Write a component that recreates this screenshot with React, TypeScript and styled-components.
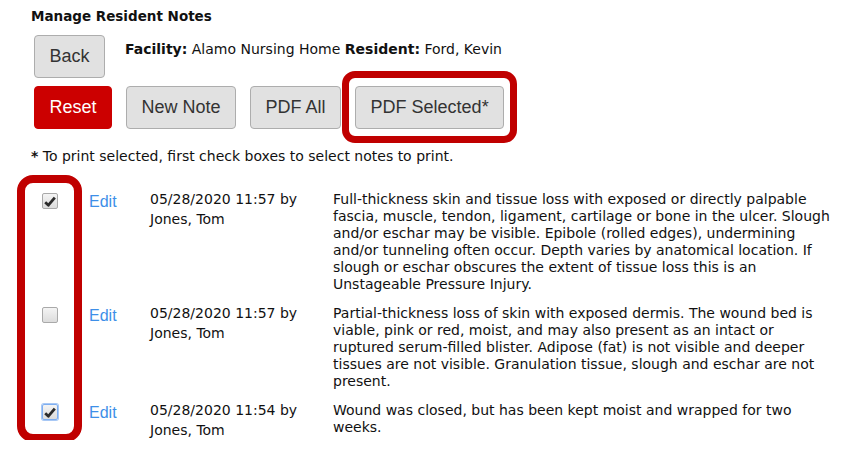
import React from "react";
import styled, {createGlobalStyle} from "styled-components";

const GlobalStyle = createGlobalStyle`
  html, body {
    margin: 0;
    padding: 0;
    background: #fff;
  }
  body {
    font-family: Verdana, "DejaVu Sans", sans-serif;
    font-size: 14px;
    color: #111;
  }
`;

type Note = {
  id: number;
  checked: boolean;
  focused?: boolean;
  date: string;
  author: string;
  text: string;
};

const notes: Note[] = [
  {
    id: 1,
    checked: true,
    date: "05/28/2020 11:57 by",
    author: "Jones, Tom",
    text:
      "Full-thickness skin and tissue loss with exposed or directly palpable fascia, muscle, tendon, ligament, cartilage or bone in the ulcer. Slough and/or eschar may be visible. Epibole (rolled edges), undermining and/or tunneling often occur. Depth varies by anatomical location. If slough or eschar obscures the extent of tissue loss this is an Unstageable Pressure Injury.",
  },
  {
    id: 2,
    checked: false,
    date: "05/28/2020 11:57 by",
    author: "Jones, Tom",
    text:
      "Partial-thickness loss of skin with exposed dermis. The wound bed is viable, pink or red, moist, and may also present as an intact or ruptured serum-filled blister. Adipose (fat) is not visible and deeper tissues are not visible. Granulation tissue, slough and eschar are not present.",
  },
  {
    id: 3,
    checked: true,
    focused: true,
    date: "05/28/2020 11:54 by",
    author: "Jones, Tom",
    text: "Wound was closed, but has been kept moist and wrapped for two weeks.",
  },
];

export default function App() {
  return (
    <>
      <GlobalStyle />
      <Page>
        <Title>Manage Resident Notes</Title>
        <HeaderRow>
          <Button>Back</Button>
          <Info>
            <b>Facility:</b> Alamo Nursing Home <b>Resident:</b> Ford, Kevin
          </Info>
        </HeaderRow>
        <Toolbar>
          <Button $variant="danger">Reset</Button>
          <Button>New Note</Button>
          <Button>PDF All</Button>
          <Marked>
            <Button>PDF Selected*</Button>
            <ButtonHighlight />
          </Marked>
        </Toolbar>
        <Footnote>
          <b>*</b> To print selected, first check boxes to select notes to print.
        </Footnote>
        <NotesGrid>
          <ColumnHighlight />
          {notes.map((n) => (
            <React.Fragment key={n.id}>
              <CheckCell>
                <CheckBox $focused={n.focused}>
                  {n.checked && (
                    <svg width="12" height="11" viewBox="0 0 12 11">
                      <path d="M1.2 6.2 L4.4 9.2 L10.8 1.6" fill="none" stroke="#2b2b2b" strokeWidth="2.8" strokeLinejoin="round" />
                    </svg>
                  )}
                </CheckBox>
              </CheckCell>
              <EditLink href="#">Edit</EditLink>
              <DateCell>
                {n.date}
                <br />
                {n.author}
              </DateCell>
              <NoteText>{n.text}</NoteText>
            </React.Fragment>
          ))}
        </NotesGrid>
      </Page>
    </>
  );
}

const Page = styled.div`
  padding: 8px 0 0 31px;
  width: 856px;
  box-sizing: border-box;
`;

const Title = styled.div`
  font-weight: bold;
  font-size: 13.5px;
  line-height: 17px;
`;

const HeaderRow = styled.div`
  display: flex;
  align-items: flex-start;
  gap: 20px;
  margin: 10px 0 0 3px;
`;

const Info = styled.div`
  padding-top: 6px;
  line-height: 17px;
`;

const Toolbar = styled.div`
  display: flex;
  gap: 14px;
  margin: 8px 0 0 3px;
`;

const Button = styled.button<{$variant?: "danger"}>`
  height: 43px;
  padding: 0 14.5px;
  border-radius: 4px;
  font-family: "Liberation Sans", Arial, sans-serif;
  font-size: 18px;
  cursor: pointer;
  border: 1px solid ${(p) => (p.$variant === "danger" ? "#cc0000" : "#adadad")};
  background: ${(p) => (p.$variant === "danger" ? "#cc0000" : "#e1e1e1")};
  color: ${(p) => (p.$variant === "danger" ? "#fff" : "#333")};
`;

const Marked = styled.div`
  position: relative;
  display: flex;
`;

const ButtonHighlight = styled.span`
  position: absolute;
  left: -13px;
  top: -15px;
  right: -13px;
  bottom: -14px;
  border: 7px solid #c00000;
  border-radius: 13px;
  pointer-events: none;
`;

const Footnote = styled.div`
  margin-top: 19px;
  line-height: 17px;
`;

const NotesGrid = styled.div`
  position: relative;
  display: grid;
  grid-template-columns: 65px 54px 176px 500px;
  column-gap: 7px;
  row-gap: 12px;
  margin: 26px 0 0 -14px;
  line-height: 17px;
`;

const ColumnHighlight = styled.span`
  position: absolute;
  left: 0;
  top: -16px;
  bottom: -2px;
  width: 65px;
  box-sizing: border-box;
  border: 8px solid #c00000;
  border-radius: 16px;
  pointer-events: none;
`;

const CheckCell = styled.div`
  display: flex;
  justify-content: center;
  padding-top: 2px;
`;

const CheckBox = styled.span<{$focused?: boolean}>`
  width: 14px;
  height: 14px;
  display: flex;
  align-items: center;
  justify-content: center;
  border: 1px solid ${(p) => (p.$focused ? "#7eaef0" : "#a9a9a9")};
  border-radius: 2px;
  background: linear-gradient(#f4f4f4, #dcdcdc);
  box-shadow: ${(p) => (p.$focused ? "0 0 0 1px #a8c8f5" : "none")};
`;

const EditLink = styled.a`
  font-family: "Liberation Sans", Arial, sans-serif;
  font-size: 16px;
  line-height: 20px;
  color: #3d8fe8;
  text-decoration: none;
  padding-top: 1px;
`;

const DateCell = styled.div`
  line-height: 20px;
  margin-top: -2px;
`;

const NoteText = styled.div``;
